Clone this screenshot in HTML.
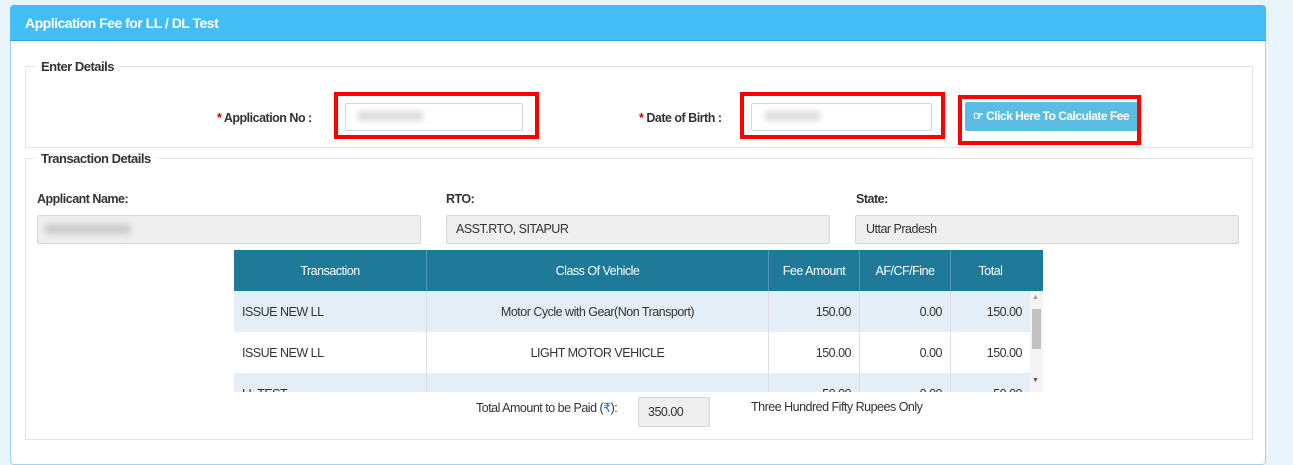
<!DOCTYPE html>
<html><head><style>
body{margin:0;width:1293px;height:449px;background:#eaf5fb;font-family:"Liberation Sans",sans-serif;position:relative;overflow:hidden;color:#333}
.a{position:absolute}
.t{font-size:12.5px;letter-spacing:-0.5px;white-space:nowrap}
.b{font-weight:bold}
.inp{position:absolute;background:#eee;border:1px solid #d6d6d6;border-radius:2px;box-sizing:border-box}
.red{position:absolute;border:4px solid #f00;box-sizing:border-box}
table{border-collapse:collapse;font-size:12.5px;letter-spacing:-0.5px}
td{padding:0 8px;border-right:1px solid #dde;}
</style></head><body>
<div class="a" style="left:10px;top:5px;width:1256px;height:460px;background:#fff;border:1px solid #9fd6ef;border-radius:4px;box-sizing:border-box"></div>
<div class="a" style="left:10px;top:5px;width:1256px;height:36px;background:#43bdf6;border-radius:4px 4px 0 0;border-bottom:1px solid #2aa6df;box-sizing:border-box"></div>
<div class="a t b" style="left:25px;top:15px;color:#fff;font-size:14px">Application Fee for LL / DL Test</div>

<div class="a" style="left:25px;top:66px;width:1228px;height:82px;border:1px solid #e3e3e3;box-sizing:border-box"></div>
<div class="a t b" style="left:35px;top:59px;background:#fff;padding:0 6px;font-size:13px;color:#333">Enter Details</div>
<div class="a t b" style="left:217px;top:111px;color:#333"><span style="color:#c00">*</span> Application No :</div>
<div class="inp" style="left:345px;top:103px;width:178px;height:28px;background:#fff"></div>
<div class="a" style="left:358px;top:111px;width:65px;height:10px;background:#ddd;filter:blur(3px)"></div>
<div class="red" style="left:334px;top:92px;width:205px;height:47px"></div>
<div class="a t b" style="left:639px;top:111px;color:#333"><span style="color:#c00">*</span> Date of Birth :</div>
<div class="inp" style="left:751px;top:103px;width:181px;height:28px;background:#fff"></div>
<div class="a" style="left:765px;top:111px;width:55px;height:10px;background:#ddd;filter:blur(3px)"></div>
<div class="red" style="left:740px;top:92px;width:205px;height:47px"></div>
<div class="a" style="left:965px;top:102px;width:175px;height:29px;background:#5bbde4;border-radius:2px"></div>
<div class="a t b" style="left:973px;top:109px;color:#fff;font-size:12px">☞ Click Here To Calculate Fee</div>
<div class="red" style="left:958px;top:95px;width:183px;height:50px"></div>

<div class="a" style="left:25px;top:158px;width:1228px;height:282px;border:1px solid #e3e3e3;box-sizing:border-box"></div>
<div class="a t b" style="left:35px;top:151px;background:#fff;padding:0 6px;font-size:13px">Transaction Details</div>
<div class="a t b" style="left:37px;top:192px">Applicant Name:</div>
<div class="a t b" style="left:446px;top:192px">RTO:</div>
<div class="a t b" style="left:856px;top:192px">State:</div>
<div class="inp" style="left:37px;top:215px;width:384px;height:29px"></div>
<div class="a" style="left:45px;top:224px;width:85px;height:10px;background:#ccc;filter:blur(3px)"></div>
<div class="inp" style="left:446px;top:215px;width:384px;height:29px"></div>
<div class="a t" style="left:456px;top:222px">ASST.RTO, SITAPUR</div>
<div class="inp" style="left:855px;top:215px;width:384px;height:29px"></div>
<div class="a t" style="left:866px;top:222px">Uttar Pradesh</div>

<div class="a" style="left:234px;top:250px;width:809px;height:142px;overflow:hidden">
<div class="a" style="left:0;top:0;width:809px;height:41px;background:#1f7a99"></div>
<table style="width:796px;position:relative">
<tr style="color:#fff;height:41px;text-align:center"><td style="width:176px;border-color:#4a9ab5">Transaction</td><td style="width:325px;border-color:#4a9ab5">Class Of Vehicle</td><td style="width:74px;border-color:#4a9ab5">Fee Amount</td><td style="width:74px;border-color:#4a9ab5">AF/CF/Fine</td><td style="border:0">Total</td></tr>
<tr style="background:#e4eef7;height:41px"><td>ISSUE NEW LL</td><td style="text-align:center">Motor Cycle with Gear(Non Transport)</td><td style="text-align:right">150.00</td><td style="text-align:right">0.00</td><td style="text-align:right;border:0">150.00</td></tr>
<tr style="background:#fff;height:41px"><td>ISSUE NEW LL</td><td style="text-align:center">LIGHT MOTOR VEHICLE</td><td style="text-align:right">150.00</td><td style="text-align:right">0.00</td><td style="text-align:right;border:0">150.00</td></tr>
<tr style="background:#e4eef7;height:41px"><td>LL TEST</td><td></td><td style="text-align:right">50.00</td><td style="text-align:right">0.00</td><td style="text-align:right;border:0">50.00</td></tr>
</table>
<div class="a" style="left:796px;top:41px;width:13px;height:101px;background:#f4f4f4"></div>
<div class="a" style="left:798px;top:59px;width:9px;height:40px;background:#c1c1c1"></div>
<div class="a" style="left:798px;top:44px;font-size:7px;color:#999">▲</div>
<div class="a" style="left:798px;top:127px;font-size:7px;color:#555">▼</div>
</div>

<div class="a t" style="left:476px;top:400px">Total Amount to be Paid (<span style="color:#36c">₹</span>):</div>
<div class="inp" style="left:638px;top:397px;width:72px;height:30px"></div>
<div class="a t" style="left:648px;top:405px">350.00</div>
<div class="a t" style="left:751px;top:400px">Three Hundred Fifty Rupees Only</div>
</body></html>
